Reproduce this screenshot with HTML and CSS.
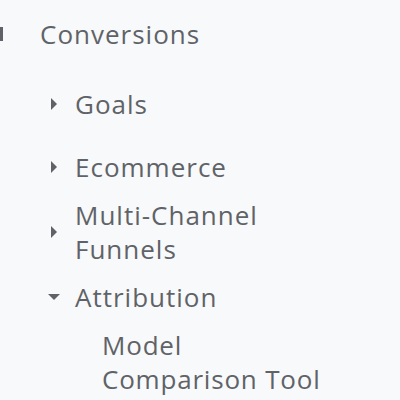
FILE: index.html
```html
<!DOCTYPE html>
<html lang="en">
<head>
    <meta charset="UTF-8">
    <title>Conversions</title>
    <link rel="stylesheet" href="styles.css">
</head>
<body>
    <nav class="nav">
        <div class="section">
            <svg class="section-icon" width="24" height="24" viewBox="0 0 24 24">
                <rect x="21" y="5" width="3" height="14" fill="#5f6368"/>
            </svg>
            <span class="section-title">Conversions</span>
        </div>
        <ul class="items">
            <li class="item first">
                <svg class="caret" width="12" height="12" viewBox="0 0 12 12"><path d="M3 0 L9 6 L3 12 Z"/></svg>
                <span>Goals</span>
            </li>
            <li class="item">
                <svg class="caret" width="12" height="12" viewBox="0 0 12 12"><path d="M3 0 L9 6 L3 12 Z"/></svg>
                <span>Ecommerce</span>
            </li>
            <li class="item">
                <svg class="caret" width="12" height="12" viewBox="0 0 12 12"><path d="M3 0 L9 6 L3 12 Z"/></svg>
                <span>Multi-Channel<br>Funnels</span>
            </li>
            <li class="item">
                <svg class="caret" width="12" height="12" viewBox="0 0 12 12"><path d="M0 3 L12 3 L6 9 Z"/></svg>
                <span>Attribution</span>
            </li>
            <li class="sub">Model<br>Comparison Tool</li>
        </ul>
    </nav>
</body>
</html>
```

FILE: styles.css
```css
body {
    margin: 0;
    background-color: #f8f9fa;
    font-family: 'Open Sans', sans-serif;
    color: #5f6368;
    overflow: hidden;
}

.nav {
    padding-top: 14px;
}

.section {
    display: flex;
    align-items: center;
    height: 40px;
    margin-bottom: 26px;
}

.section-icon {
    margin-left: -21px;
    margin-right: 37px;
}

.section-title {
    font-size: 26px;
    line-height: 40px;
    letter-spacing: 1px;
}

.items {
    list-style: none;
    margin: 0;
    padding: 0;
}

.item {
    display: flex;
    align-items: center;
    font-size: 26px;
    line-height: 34px;
    letter-spacing: 1px;
    padding: 7px 0 7px 48px;
}

.item.first {
    margin-bottom: 15px;
}

.caret {
    fill: #5f6368;
    margin-right: 15px;
}

.sub {
    font-size: 26px;
    line-height: 34px;
    letter-spacing: 0.8px;
    padding: 7px 0 7px 102px;
}
```
